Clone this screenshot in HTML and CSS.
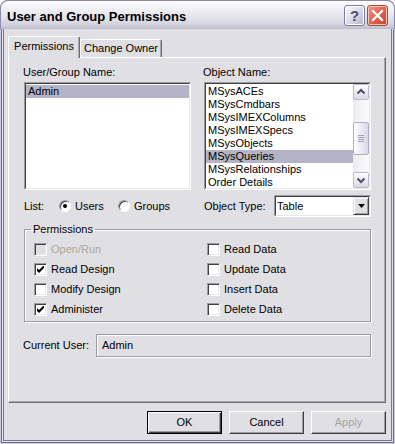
FILE: index.html
```html
<!DOCTYPE html>
<html lang="en">
  <head>
    <meta charset="UTF-8" />
    <title>User and Group Permissions</title>
    <link rel="stylesheet" href="styles.css">
  </head>
  <body>
    <div class="window">
      <div class="titlebar">
        <span class="title">User and Group Permissions</span>
        <div class="caption-buttons">
          <span class="cap-btn help">?</span>
          <span class="cap-btn close">
            <svg width="19" height="19" viewBox="0 0 19 19">
              <path d="M5 5 L14 14 M14 5 L5 14" stroke="#fff" stroke-width="2.2" stroke-linecap="square" />
            </svg>
          </span>
        </div>
      </div>

      <div class="dialog">
        <div class="tabs">
          <span class="tab active">Permissions</span>
          <span class="tab">Change Owner</span>
        </div>

        <div class="panel">
          <div class="columns">
            <div class="col">
              <div class="caption">User/Group Name:</div>
              <div class="sunken list-frame">
                <div class="sunken-inner list-body">
                  <div class="item selected">Admin</div>
                </div>
              </div>
            </div>
            <div class="col">
              <div class="caption">Object Name:</div>
              <div class="sunken list-frame">
                <div class="sunken-inner list-body objects">
                  <div class="items">
                    <div class="item">MSysACEs</div>
                    <div class="item">MSysCmdbars</div>
                    <div class="item">MSysIMEXColumns</div>
                    <div class="item">MSysIMEXSpecs</div>
                    <div class="item">MSysObjects</div>
                    <div class="item selected">MSysQueries</div>
                    <div class="item">MSysRelationships</div>
                    <div class="item">Order Details</div>
                  </div>
                  <div class="scrollbar">
                    <span class="sb-btn">
                      <svg width="14" height="14" viewBox="0 0 14 14">
                        <polyline points="3.5,8.5 7,5 10.5,8.5" fill="none" stroke="#4d4d6d" stroke-width="2" />
                      </svg>
                    </span>
                    <div class="track">
                      <span class="thumb">
                        <span class="grip"></span>
                        <span class="grip"></span>
                        <span class="grip"></span>
                        <span class="grip"></span>
                      </span>
                    </div>
                    <span class="sb-btn">
                      <svg width="14" height="14" viewBox="0 0 14 14">
                        <polyline points="3.5,5.5 7,9 10.5,5.5" fill="none" stroke="#4d4d6d" stroke-width="2" />
                      </svg>
                    </span>
                  </div>
                </div>
              </div>
            </div>
          </div>

          <div class="columns options">
            <div class="list-choice">
              <span class="list-label">List:</span>
              <span class="radio-option users"><span class="radio on"></span>Users</span>
              <span class="radio-option"><span class="radio"></span>Groups</span>
            </div>
            <div class="object-type">
              <span>Object Type:</span>
              <div class="sunken combo">
                <div class="sunken-inner combo-body">
                  <span class="combo-text">Table</span>
                  <span class="combo-btn">
                    <svg width="7" height="4" viewBox="0 0 7 4">
                      <polygon points="0,0 7,0 3.5,4" fill="#000" />
                    </svg>
                  </span>
                </div>
              </div>
            </div>
          </div>

          <fieldset class="group">
            <legend>Permissions</legend>
            <div class="checks">
              <div class="check disabled"><span class="box"></span>Open/Run</div>
              <div class="check"><span class="box"></span>Read Data</div>
              <div class="check"><span class="box"><svg width="7" height="7" viewBox="0 0 7 7"><polygon points="0,2 2,4 6,0 7,0 7,2 2,7 0,5" fill="#000" /></svg></span>Read Design</div>
              <div class="check"><span class="box"></span>Update Data</div>
              <div class="check"><span class="box"></span>Modify Design</div>
              <div class="check"><span class="box"></span>Insert Data</div>
              <div class="check"><span class="box"><svg width="7" height="7" viewBox="0 0 7 7"><polygon points="0,2 2,4 6,0 7,0 7,2 2,7 0,5" fill="#000" /></svg></span>Administer</div>
              <div class="check"><span class="box"></span>Delete Data</div>
            </div>
          </fieldset>

          <div class="current-user">
            <span class="current-label">Current User:</span>
            <span class="current-field">Admin</span>
          </div>
        </div>

        <div class="buttons">
          <span class="btn default">OK</span>
          <span class="btn">Cancel</span>
          <span class="btn disabled">Apply</span>
        </div>
      </div>
    </div>
  </body>
</html>
```

FILE: styles.css
```css
* {
  box-sizing: border-box;
}
body {
  margin: 0;
  background: #fff;
  font-family: 'Liberation Sans', Arial, sans-serif;
  font-size: 11px;
  line-height: 13px;
  color: #000;
}
.window {
  width: 395px;
  height: 444px;
  display: flex;
  flex-direction: column;
  background: #e0dfe3;
  border: 1px solid #c8c8d6;
  border-top: 0;
  border-radius: 8px 8px 0 0;
  padding: 0 3px 3px;
  box-shadow: inset 0 0 0 1px #6f6f8f, inset 0 0 0 2px #dedee8,
    inset 0 0 0 3px #7a7a98;
}

/* title bar */
.titlebar {
  height: 29px;
  margin: 0 -4px;
  display: flex;
  align-items: flex-start;
  border: 1px solid #8c8ca8;
  border-bottom: 0;
  border-radius: 8px 8px 0 0;
  background: linear-gradient(#ffffff 0%, #f2f2f6 25%, #e2e2ea 60%, #d2d2de 85%, #bcbccc 100%);
}
.title {
  margin: 8px 0 0 6px;
  font-size: 13px;
  line-height: 15px;
  font-weight: bold;
  color: #000;
}
.caption-buttons {
  margin: 4px 6px 0 auto;
  display: flex;
  gap: 2px;
}
.cap-btn {
  width: 21px;
  height: 21px;
  border-radius: 3px;
  display: flex;
  align-items: center;
  justify-content: center;
}
.help {
  border: 1px solid #7c7c9c;
  box-shadow: inset 0 0 0 1px #fff;
  background: linear-gradient(135deg, #fafafe 0%, #dcdcea 50%, #b4b4ca 100%);
  font-size: 15px;
  font-weight: bold;
  color: #4e4e6e;
}
.close {
  border: 1px solid #a64a3c;
  box-shadow: inset 0 0 0 1px #f4c4b8;
  background: linear-gradient(135deg, #f09884 0%, #e06a54 45%, #c8402c 100%);
}

/* dialog body */
.dialog {
  flex: 1;
  display: flex;
  flex-direction: column;
  padding: 7px 5px 6px 4px;
}
.tabs {
  position: relative;
  display: flex;
  align-items: flex-end;
  height: 22px;
  margin-bottom: -1px;
}
.tab {
  width: 82px;
  height: 18px;
  margin-bottom: 1px;
  padding-top: 2px;
  text-align: center;
  border: 1px solid;
  border-color: #fff #6f6f6f transparent #fff;
  border-bottom: 0;
  border-radius: 2px 2px 0 0;
  box-shadow: inset -1px 0 0 #a7a6aa;
}
.tab.active {
  width: 72px;
  height: 22px;
  margin-bottom: 0;
  padding-top: 3px;
  background: #e0dfe3;
}
.panel {
  flex: 1;
  border: 1px solid;
  border-color: #fff #6f6f6f #6f6f6f #fff;
  box-shadow: inset -1px -1px 0 #a7a6aa;
  padding: 8px 14px 0 15px;
}
.columns {
  display: grid;
  grid-template-columns: 167px 167px;
  column-gap: 13px;
}
.caption {
  margin: 0 0 3px -1px;
}

/* sunken boxes */
.sunken {
  border: 1px solid;
  border-color: #9d9da1 #fff #fff #9d9da1;
}
.sunken-inner {
  border: 1px solid;
  border-color: #404040 #e8e8ec #e8e8ec #404040;
  background: #fff;
}
.list-frame {
  height: 108px;
}
.list-body {
  height: 100%;
  padding-top: 1px;
  overflow: hidden;
}
.item {
  height: 13px;
  padding-left: 2px;
  white-space: nowrap;
}
.item.selected {
  background: #b4b4c6;
}
.objects {
  display: flex;
  padding-top: 0;
}
.items {
  flex: 1;
  padding-top: 1px;
}

/* scrollbar */
.scrollbar {
  width: 16px;
  display: flex;
  flex-direction: column;
  background: linear-gradient(to right, #ececf0, #fbfbfc);
}
.sb-btn {
  height: 16px;
  border: 1px solid #babacc;
  border-radius: 2px;
  background: linear-gradient(#ffffff, #d8d8e4);
  display: flex;
  align-items: center;
  justify-content: center;
}
.track {
  flex: 1;
}
.thumb {
  margin-top: 22px;
  height: 33px;
  border: 1px solid #b0b0c4;
  border-radius: 2px;
  background: linear-gradient(to right, #ffffff, #d8d8e4);
  display: flex;
  flex-direction: column;
  align-items: center;
  justify-content: center;
  gap: 1px;
}
.grip {
  width: 6px;
  height: 1px;
  background: #9e9eb4;
}

/* list and object type row */
.options {
  margin-top: 5px;
  height: 22px;
}
.list-choice,
.object-type {
  display: flex;
  align-items: center;
}
.list-label {
  width: 35px;
}
.radio-option {
  display: flex;
  align-items: center;
  gap: 4px;
}
.radio-option.users {
  width: 59px;
}
.radio {
  width: 12px;
  height: 12px;
  border-radius: 50%;
  border: 1px solid;
  border-color: #9d9da1 #fff #fff #9d9da1;
  box-shadow: inset 1px 1px 0 #404040;
  background: #fff;
  display: flex;
  align-items: center;
  justify-content: center;
}
.radio.on::after {
  content: '';
  width: 4px;
  height: 4px;
  border-radius: 50%;
  background: #000;
}
.combo {
  margin-left: auto;
  width: 97px;
  height: 22px;
}
.combo-body {
  height: 100%;
  display: flex;
  align-items: center;
}
.combo-text {
  flex: 1;
  padding-left: 1px;
}
.combo-btn {
  width: 16px;
  height: 100%;
  border: 1px solid;
  border-color: #e0dfe3 #404040 #404040 #e0dfe3;
  box-shadow: inset 1px 1px 0 #fff, inset -1px -1px 0 #9d9da1;
  background: #e0dfe3;
  display: flex;
  align-items: center;
  justify-content: center;
}

/* permissions group */
.group {
  margin: 6px 0 0;
  padding: 4px 0 1px 9px;
  border: 1px solid #9d9da1;
  box-shadow: inset 1px 1px 0 #fff, 1px 1px 0 #fff;
}
.group legend {
  padding: 0 2px;
  margin-left: -3px;
  line-height: 13px;
}
.checks {
  display: grid;
  grid-template-columns: 173px 1fr;
  grid-auto-rows: 20px;
}
.check {
  display: flex;
  align-items: flex-start;
  gap: 4px;
}
.check .box {
  margin-top: 3px;
}
.check,
.check .box + * {
  line-height: 13px;
}
.check {
  padding-top: 3px;
}
.check .box {
  margin-top: 0;
}
.box {
  width: 13px;
  height: 13px;
  flex: none;
  border: 1px solid;
  border-color: #9d9da1 #fff #fff #9d9da1;
  box-shadow: inset 1px 1px 0 #404040, inset -1px -1px 0 #e8e8ec;
  background: #fff;
  display: flex;
  align-items: center;
  justify-content: center;
}
.check.disabled {
  color: #aca899;
}
.check.disabled .box {
  background: #e0dfe3;
}

/* current user */
.current-user {
  margin-top: 12px;
  display: flex;
  align-items: center;
}
.current-label {
  width: 72px;
  margin-left: -1px;
}
.current-field {
  width: 275px;
  height: 23px;
  margin-left: 1px;
  padding-left: 5px;
  line-height: 21px;
  border: 1px solid #9d9da1;
  box-shadow: inset 1px 1px 0 #fff, 1px 1px 0 #fff;
}

/* buttons */
.buttons {
  margin-top: 8px;
  display: flex;
  justify-content: flex-end;
  gap: 7px;
}
.btn {
  width: 75px;
  height: 23px;
  line-height: 21px;
  text-align: center;
  border: 1px solid;
  border-color: #fff #404040 #404040 #fff;
  box-shadow: inset -1px -1px 0 #9d9da1;
}
.btn.default {
  border-color: #000;
  box-shadow: inset 1px 1px 0 #fff, inset -1px -1px 0 #404040,
    inset -2px -2px 0 #9d9da1;
}
.btn.disabled {
  color: #a7a6aa;
}
```
